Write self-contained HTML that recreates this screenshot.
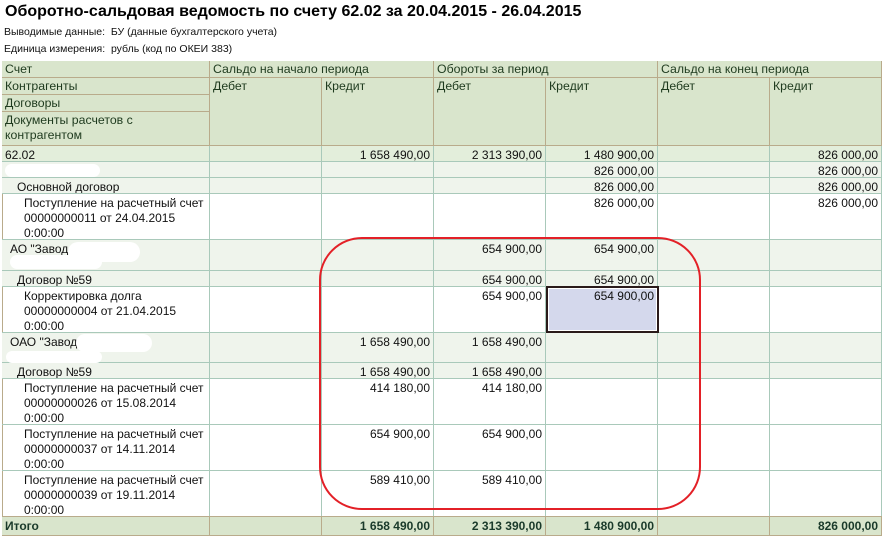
<!DOCTYPE html>
<html><head><meta charset="utf-8"><style>
*{margin:0;padding:0;box-sizing:border-box}
body{width:886px;height:538px;background:#fff;font-family:"Liberation Sans",Arial,sans-serif;font-size:12px;color:#111;position:relative;overflow:hidden}
.a{position:absolute}
.r{position:absolute;left:2px;width:880px;display:flex;border-bottom:1px solid #a9c9ba}
.r>div{border-right:1px solid #a9c9ba;padding:2px 3px 0 3px;line-height:15px;white-space:nowrap;overflow:hidden}
.r>div:first-child{width:208px}
.r>div:not(:first-child){width:112px;text-align:right}
.g{background:#eff4ec}
.h{position:absolute;background:#d9e5cc;border-right:1px solid #b9ab8b;border-bottom:1px solid #b9ab8b;padding:1px 3px;line-height:15px;color:#1e3a1e;font-size:12.3px}
.blob{position:absolute;background:#fff;border-radius:10px}
</style></head><body>
<div class="a" style="left:5px;top:3px;font-size:16px;font-weight:bold;color:#000">Оборотно-сальдовая ведомость по счету 62.02 за 20.04.2015 - 26.04.2015</div>
<div class="a" style="left:4px;top:26px;font-size:10.5px">Выводимые данные:&nbsp; БУ (данные бухгалтерского учета)</div>
<div class="a" style="left:4px;top:43px;font-size:10.5px">Единица измерения:&nbsp; рубль (код по ОКЕИ 383)</div>

<div class="a" style="left:2px;top:61px;width:880px;height:84px;border-top:1px solid #b9ab8b;border-left:1px solid #b9ab8b;background:#d9e5cc"></div>
<div class="h" style="left:2px;top:61px;width:208px;height:17px">Счет</div>
<div class="h" style="left:2px;top:78px;width:208px;height:17px">Контрагенты</div>
<div class="h" style="left:2px;top:95px;width:208px;height:17px">Договоры</div>
<div class="h" style="left:2px;top:112px;width:208px;height:34px">Документы расчетов с<br>контрагентом</div>
<div class="h" style="left:210px;top:61px;width:224px;height:17px">Сальдо на начало периода</div>
<div class="h" style="left:434px;top:61px;width:224px;height:17px">Обороты за период</div>
<div class="h" style="left:658px;top:61px;width:224px;height:17px">Сальдо на конец периода</div>
<div class="h" style="left:210px;top:78px;width:112px;height:68px">Дебет</div>
<div class="h" style="left:322px;top:78px;width:112px;height:68px">Кредит</div>
<div class="h" style="left:434px;top:78px;width:112px;height:68px">Дебет</div>
<div class="h" style="left:546px;top:78px;width:112px;height:68px">Кредит</div>
<div class="h" style="left:658px;top:78px;width:112px;height:68px">Дебет</div>
<div class="h" style="left:770px;top:78px;width:112px;height:68px">Кредит</div>

<div class="a" style="left:2px;top:146px;width:1px;height:370px;background:#b9ab8b"></div>

<div class="r" style="top:146px;height:16px;background:#e3eedb"><div>62.02</div><div></div><div>1 658 490,00</div><div>2 313 390,00</div><div>1 480 900,00</div><div></div><div>826 000,00</div></div>
<div class="r g" style="top:162px;height:16px"><div></div><div></div><div></div><div></div><div>826 000,00</div><div></div><div>826 000,00</div></div>
<div class="r g" style="top:178px;height:16px"><div style="padding-left:15px">Основной договор</div><div></div><div></div><div></div><div>826 000,00</div><div></div><div>826 000,00</div></div>
<div class="r" style="top:194px;height:46px"><div style="padding-left:22px">Поступление на расчетный счет<br>00000000011 от 24.04.2015<br>0:00:00</div><div></div><div></div><div></div><div>826 000,00</div><div></div><div>826 000,00</div></div>
<div class="r g" style="top:240px;height:31px"><div style="padding-left:8px">АО "Завод</div><div></div><div></div><div>654 900,00</div><div>654 900,00</div><div></div><div></div></div>
<div class="r g" style="top:271px;height:16px"><div style="padding-left:15px">Договор №59</div><div></div><div></div><div>654 900,00</div><div>654 900,00</div><div></div><div></div></div>
<div class="r" style="top:287px;height:46px"><div style="padding-left:22px">Корректировка долга<br>00000000004 от 21.04.2015<br>0:00:00</div><div></div><div></div><div>654 900,00</div><div>654 900,00</div><div></div><div></div></div>
<div class="r g" style="top:333px;height:30px"><div style="padding-left:8px">ОАО "Завод</div><div></div><div>1 658 490,00</div><div>1 658 490,00</div><div></div><div></div><div></div></div>
<div class="r g" style="top:363px;height:16px"><div style="padding-left:15px">Договор №59</div><div></div><div>1 658 490,00</div><div>1 658 490,00</div><div></div><div></div><div></div></div>
<div class="r" style="top:379px;height:46px"><div style="padding-left:22px">Поступление на расчетный счет<br>00000000026 от 15.08.2014<br>0:00:00</div><div></div><div>414 180,00</div><div>414 180,00</div><div></div><div></div><div></div></div>
<div class="r" style="top:425px;height:46px"><div style="padding-left:22px">Поступление на расчетный счет<br>00000000037 от 14.11.2014<br>0:00:00</div><div></div><div>654 900,00</div><div>654 900,00</div><div></div><div></div><div></div></div>
<div class="r" style="top:471px;height:46px"><div style="padding-left:22px">Поступление на расчетный счет<br>00000000039 от 19.11.2014<br>0:00:00</div><div></div><div>589 410,00</div><div>589 410,00</div><div></div><div></div><div></div></div>
<div class="r" style="top:516px;height:20px;background:#d9e5cc;border-top:1px solid #b9ab8b;border-bottom:1px solid #b9ab8b;font-weight:bold;color:#1a3a2a"><div style="border-color:#b9ab8b">Итого</div><div style="border-color:#b9ab8b"></div><div style="border-color:#b9ab8b">1 658 490,00</div><div style="border-color:#b9ab8b">2 313 390,00</div><div style="border-color:#b9ab8b">1 480 900,00</div><div style="border-color:#b9ab8b"></div><div style="border-color:#b9ab8b">826 000,00</div></div>

<div class="a" style="left:546px;top:286px;width:113px;height:47px;border:2px solid #2a1a1a;background:#d4d8ec;box-shadow:inset 0 0 0 1px #fff;text-align:right;padding:1px 3px;line-height:15px">654 900,00</div>

<div class="blob" style="left:5px;top:164px;width:95px;height:13px"></div>
<div class="blob" style="left:68px;top:242px;width:72px;height:20px"></div>
<div class="blob" style="left:10px;top:255px;width:92px;height:14px"></div>
<div class="blob" style="left:76px;top:334px;width:76px;height:18px"></div>
<div class="blob" style="left:6px;top:351px;width:96px;height:12px"></div>

<svg class="a" style="left:0;top:0" width="886" height="538"><rect x="320" y="238" width="380" height="271" rx="42" ry="42" fill="none" stroke="#e32027" stroke-width="2"/></svg>
</body></html>
